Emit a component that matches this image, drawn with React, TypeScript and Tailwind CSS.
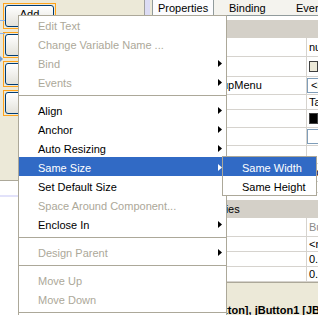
import React from "react"

type MenuEntry =
  | { kind: "item"; label: string; disabled?: boolean; sub?: boolean; active?: boolean }
  | { kind: "sep" }

const mainMenu: MenuEntry[] = [
  { kind: "item", label: "Edit Text", disabled: true },
  { kind: "item", label: "Change Variable Name ...", disabled: true },
  { kind: "item", label: "Bind", disabled: true, sub: true },
  { kind: "item", label: "Events", disabled: true, sub: true },
  { kind: "sep" },
  { kind: "item", label: "Align", sub: true },
  { kind: "item", label: "Anchor", sub: true },
  { kind: "item", label: "Auto Resizing", sub: true },
  { kind: "item", label: "Same Size", sub: true, active: true },
  { kind: "item", label: "Set Default Size" },
  { kind: "item", label: "Space Around Component...", disabled: true },
  { kind: "item", label: "Enclose In", sub: true },
  { kind: "sep" },
  { kind: "item", label: "Design Parent", disabled: true, sub: true },
  { kind: "sep" },
  { kind: "item", label: "Move Up", disabled: true },
  { kind: "item", label: "Move Down", disabled: true },
  { kind: "sep" },
]

const subMenu: MenuEntry[] = [
  { kind: "item", label: "Same Width", active: true },
  { kind: "item", label: "Same Height" },
]

const props = [
  { name: "action", value: "null", h: "h-[19px]" },
  { name: "background", swatch: "bg-[#ECE9D8]", h: "h-[20px]" },
  { name: "componentPopupMenu", combo: "<none>", h: "h-[18px]" },
  { name: "font", value: "Tahoma 11 Plain", h: "h-[15px]" },
  { name: "foreground", swatch: "bg-black", h: "h-[18px]" },
  { name: "icon", combo: "", h: "h-[18px]" },
  { name: "mnemonic", value: "", h: "h-[18px]" },
  { name: "text", value: "Add", h: "h-[18px]" },
  { name: "toolTipText", value: "", h: "h-[11px]" },
]

const otherProps = [
  { name: "UI", value: "ButtonUI", gray: true, h: "h-[19px]" },
  { name: "UIClassID", value: "<none>", h: "h-[15px]" },
  { name: "alignmentX", value: "0.5", h: "h-[15px]" },
  { name: "alignmentY", value: "0.5", h: "h-[15px]" },
]

function Arrow({ white }: { white?: boolean }) {
  return (
    <svg width="4" height="7" viewBox="0 0 4 7" className="mt-[1px] shrink-0">
      <polygon points="0,0 4,3.5 0,7" fill={white ? "#ffffff" : "#000000"} />
    </svg>
  )
}

function MenuList({ entries, first }: { entries: MenuEntry[]; first?: string }) {
  return (
    <div className="flex flex-col">
      {entries.map((e, i) =>
        e.kind === "sep" ? (
          <div key={i} className="h-[9px] flex flex-col justify-center">
            <div className="h-px bg-[#ACA899]" />
          </div>
        ) : (
          <div
            key={i}
            className={
              "flex items-center pl-[19px] pr-[4px] overflow-hidden " +
              (i === 0 && first ? first : "h-[19px] ") +
              (e.active ? " bg-[#316AC5] text-white" : e.disabled ? " text-[#ACA899]" : " text-black")
            }
          >
            <span className={"block h-[19px] leading-[16px] whitespace-nowrap " + (i === 0 && first ? "pt-[2px]" : "pt-[3px]")}>
              {e.label}
            </span>
            {e.sub && (
              <span className="ml-auto flex">
                <Arrow white={e.active} />
              </span>
            )}
          </div>
        )
      )}
    </div>
  )
}

function DesignButton({ label }: { label?: string }) {
  return (
    <div className="h-[26px] w-[53px] border border-[#FFA31A] p-px">
      <div className="h-full rounded-[3px] border border-[#003C74] bg-gradient-to-b from-white to-[#E3E2DA] flex items-start justify-center pt-[2px] leading-[13px]">
        {label}
      </div>
    </div>
  )
}

function Designer() {
  return (
    <div className="w-[150px] flex flex-col">
      <div className="h-[181px] bg-[#ECE9D8] border-b border-[#ACA899] flex">
        <div className="relative flex-1 flex flex-col gap-[3px] pt-[3px] pl-[3px]">
          <DesignButton label="Add" />
          <DesignButton />
          <DesignButton />
          <DesignButton />
          <div className="absolute left-0 top-[20px] h-px w-[5px] bg-[#8CB4E8]" />
          <div className="absolute left-0 top-[33px] h-px w-[5px] bg-[#8CB4E8]" />
          <div className="absolute left-0 top-[56px] h-0 w-0 border-y-[3px] border-l-[3px] border-y-transparent border-l-[#6A9AD8]" />
        </div>
        <div className="w-px bg-[#A0A0A0]" />
        <div className="w-[5px] bg-[#DCDCF4]" />
      </div>
      <div className="flex-1 bg-white pt-[14px]">
        <div className="h-[2px] bg-[#E2E2FA]" />
      </div>
    </div>
  )
}

function PropRow({ p }: { p: any }) {
  return (
    <div className={"flex border-b border-[#D6D3CE] " + p.h}>
      <div className="w-[157px] shrink-0 border-r border-[#D6D3CE] whitespace-nowrap overflow-hidden leading-[17px]">
        <span className="-ml-[2px]">{p.name}</span>
      </div>
      <div className="flex-1 overflow-hidden whitespace-nowrap pl-[2px] flex items-center">
        {p.swatch && <div className={"h-[11px] w-[12px] border border-[#404040] " + p.swatch} />}
        {p.combo !== undefined && (
          <div className="h-[15px] w-[14px] -ml-[2px] shrink-0 border border-[#7F9DB9] bg-white pl-[3px] leading-[13px]">{p.combo}</div>
        )}
        {p.value !== undefined && <span className={p.gray ? "text-[#8C8C8C]" : ""}>{p.value}</span>}
      </div>
    </div>
  )
}

function PropertyPanel() {
  return (
    <div className="flex-1 flex flex-col bg-white overflow-hidden">
      <div className="h-[15px] bg-[#ECE9D8] flex pl-[2px] whitespace-nowrap">
        <div className="w-[62px] shrink-0 bg-[#FCFCFE] border-x border-[#919B9C] pl-[5px] pt-px leading-[14px]">Properties</div>
        <div className="w-[78px] shrink-0 bg-[#F4F3EE] pl-[15px] pt-px leading-[14px]">Binding</div>
        <div className="flex-1 bg-[#F4F3EE] pl-[4px] pt-px leading-[14px]">Events</div>
      </div>
      <div className="h-px bg-[#919B9C]" />
      <div className="h-[4px]" />
      <div className="h-[18px] bg-[#D4D0C8] pl-[9px] leading-[18px]">Properties</div>
      {props.map((p) => (
        <PropRow key={p.name} p={p} />
      ))}
      <div className="h-[7px]" />
      <div className="h-[18px] bg-[#D4D0C8] pl-[9px] leading-[18px] whitespace-nowrap">Other Properties</div>
      {otherProps.map((p) => (
        <PropRow key={p.name} p={p} />
      ))}
      <div className="flex-1 bg-[#ECE9D8] border-t border-[#ACA899] flex flex-col justify-end">
        <div className="pl-[2px] font-bold whitespace-nowrap leading-[13px] h-[11px]">
          jButton2 [JButton], jButton1 [JButton]
        </div>
      </div>
    </div>
  )
}

export default function App() {
  return (
    <div className="relative w-[318px] h-[315px] overflow-hidden bg-white text-[11px] text-black font-['Liberation_Sans',Arial,sans-serif]">
      <div className="flex h-full">
        <Designer />
        <PropertyPanel />
      </div>
      <div className="absolute left-[18px] top-[15px] w-[209px] h-[320px] bg-white border border-[#ACA899]">
        <MenuList entries={mainMenu} first="h-[18px]" />
      </div>
      <div className="absolute left-[222px] top-[156px] w-[95px] bg-white border border-[#ACA899]">
        <MenuList entries={subMenu} />
      </div>
    </div>
  )
}
